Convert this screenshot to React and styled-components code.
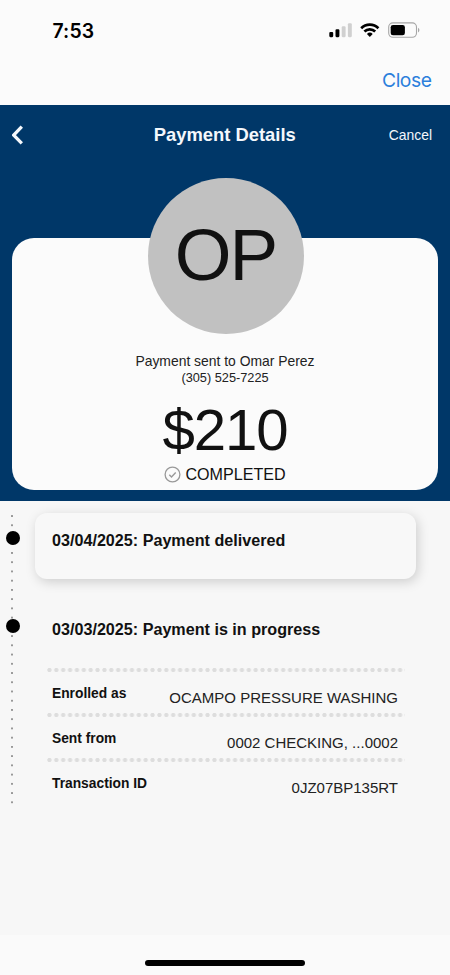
import React from "react"
import styled, { createGlobalStyle, css } from "styled-components"

const GlobalStyle = createGlobalStyle`
  * {
    box-sizing: border-box;
  }
  body {
    margin: 0;
    background-color: #f7f7f7;
    font-family: "Liberation Sans", Arial, sans-serif;
    color: #111;
  }
`

const Screen = styled.div`
  display: flex;
  flex-direction: column;
  width: 450px;
  height: 975px;
  overflow: hidden;
  background-color: #f7f7f7;
`

const StatusBar = styled.div`
  display: flex;
  align-items: center;
  justify-content: space-between;
  height: 60px;
  padding: 0 30px 0 52.5px;
  background-color: #fbfbfb;
`

const Time = styled.span`
  padding-top: 1px;
  font-family: Inter, sans-serif;
  font-size: 19.4px;
  font-weight: 600;
  letter-spacing: 0.1px;
  color: #000;
`

const StatusIcons = styled.svg`
  width: 91px;
  height: 18px;
`

const SheetBar = styled.div`
  display: flex;
  justify-content: flex-end;
  height: 45px;
  padding: 8px 18.5px 0 0;
  background-color: #fbfbfb;
`

const CloseLink = styled.span`
  font-family: Inter, sans-serif;
  font-size: 19.3px;
  line-height: 24px;
  letter-spacing: -0.45px;
  color: #2b7fdc;
`

const Hero = styled.div`
  height: 396px;
  padding: 0 12px;
  background-color: #003768;
`

const NavBar = styled.div`
  display: grid;
  grid-template-columns: 1fr auto 1fr;
  align-items: center;
  height: 59px;
  padding-right: 6px;
  color: #f4f8fc;
`

const BackIcon = styled.svg`
  width: 12px;
  height: 20px;
`

const Title = styled.h1`
  margin: 0;
  padding-left: 5.5px;
  font-size: 18.4px;
  font-weight: bold;
`

const CancelLink = styled.span`
  justify-self: end;
  font-size: 13.9px;
`

const PaymentCard = styled.div`
  display: flex;
  flex-direction: column;
  align-items: center;
  height: 252px;
  margin-top: 74px;
  border-radius: 22px;
  background-color: #fbfbfb;
`

const Avatar = styled.div`
  flex-shrink: 0;
  width: 156px;
  height: 156px;
  margin-top: -60px;
  margin-left: 1px;
  border-radius: 50%;
  background-color: #c1c1c1;
  font-size: 73px;
  line-height: 153px;
  letter-spacing: -2px;
  text-align: center;
`

const Recipient = styled.div`
  margin-top: 19px;
  font-size: 13.9px;
  line-height: 16px;
  color: #222;
`

const Phone = styled.div`
  font-size: 12.75px;
  line-height: 17px;
  color: #222;
`

const Amount = styled.div`
  margin-top: 10.5px;
  font-size: 58.2px;
  line-height: 66px;
  letter-spacing: -1.1px;
`

const Status = styled.div`
  display: flex;
  align-items: center;
  gap: 4px;
  margin-top: 1.5px;
  font-size: 16.1px;
  line-height: 20px;
`

const StatusIcon = styled.svg`
  width: 17px;
  height: 17px;
`

const Timeline = styled.div`
  display: flex;
  height: 434px;
`

const Rail = styled.div`
  display: flex;
  flex-direction: column;
  gap: 74.8px;
  width: 25px;
  height: 294px;
  margin-top: 11px;
  padding: 18.6px 0 0 5.7px;
  background: radial-gradient(circle, #777 0.5px, transparent 1.2px) 7.2px -0.6px / 10px 9.24px
    repeat-y;
`

const Marker = styled.span`
  width: 14px;
  height: 14px;
  border-radius: 50%;
  background-color: #000;
`

const Events = styled.div`
  width: 380.5px;
  margin: 12px 0 0 10px;
`

const eventStyles = css`
  padding-left: 17px;
  font-size: 16.15px;
  font-weight: bold;
  line-height: 20px;
`

const ActiveEvent = styled.div`
  ${eventStyles}
  height: 65.5px;
  padding-top: 17px;
  border-radius: 12px;
  background-color: #f8f8f8;
  box-shadow: 2px 3px 12px rgba(0, 0, 0, 0.17);
`

const Event = styled.div`
  ${eventStyles}
  padding-top: 40.5px;
`

const Details = styled.dl`
  width: 359px;
  margin: 29px 0 0 10.8px;
`

const DetailRow = styled.div`
  display: flex;
  justify-content: space-between;
  height: 45px;
  padding: 0 6.8px 0 6.2px;
  background: radial-gradient(circle, #dddddd 1.7px, transparent 2.6px) 0 0 / 6.885px 4px
    repeat-x;
`

const Label = styled.dt`
  padding-top: 17.5px;
  font-size: 13.8px;
  font-weight: bold;
  line-height: 16px;
`

const Value = styled.dd`
  margin: 0;
  padding-top: 21px;
  font-size: 15px;
  line-height: 18px;
  color: #222;
`

const HomeArea = styled.div`
  display: flex;
  justify-content: center;
  flex-grow: 1;
  padding-top: 25px;
  background-color: #fafafa;
`

const HomeIndicator = styled.div`
  width: 160.5px;
  height: 5.5px;
  border-radius: 3px;
  background-color: #000;
`

const details = [
  { label: "Enrolled as", value: "OCAMPO PRESSURE WASHING" },
  { label: "Sent from", value: "0002 CHECKING, ...0002" },
  { label: "Transaction ID", value: "0JZ07BP135RT" },
]

const App = () => (
  <>
    <GlobalStyle />
    <Screen>
      <StatusBar>
        <Time>7:53</Time>
        <StatusIcons viewBox="329 21 91 18">
          <rect x="329.3" y="32" width="3.9" height="5.2" rx="1.1" />
          <rect x="335.5" y="29.3" width="3.9" height="7.9" rx="1.1" />
          <rect x="341.7" y="26.3" width="3.9" height="10.9" rx="1.1" fill="#d0d0d0" />
          <rect x="347.9" y="23.2" width="3.9" height="14" rx="1.1" fill="#d0d0d0" />
          <g fill="none" stroke="#000" strokeWidth="2.7">
            <path d="M361.2 28.2a12.2 12.2 0 0 1 17.2 0" />
            <path d="M364.4 31.5a7.7 7.7 0 0 1 10.8 0" />
          </g>
          <path d="M369.8 36.9l-2.9-2.9a4.1 4.1 0 0 1 5.8 0z" />
          <rect
            x="388.7"
            y="22.9"
            width="27.8"
            height="14.4"
            rx="4.2"
            fill="none"
            stroke="#a6a6a6"
            strokeWidth="1.1"
          />
          <rect x="390.7" y="24.9" width="14.2" height="10.4" rx="2.3" />
          <path d="M418 27.8c1.9.8 1.9 3.8 0 4.6z" fill="#a6a6a6" />
        </StatusIcons>
      </StatusBar>
      <SheetBar>
        <CloseLink>Close</CloseLink>
      </SheetBar>
      <Hero>
        <NavBar>
          <BackIcon viewBox="0 0 12 20" fill="none" stroke="#f4f8fc" strokeWidth="3.3">
            <path d="M9.8 1.7L1.7 10.1l8.1 8.3" />
          </BackIcon>
          <Title>Payment Details</Title>
          <CancelLink>Cancel</CancelLink>
        </NavBar>
        <PaymentCard>
          <Avatar>OP</Avatar>
          <Recipient>Payment sent to Omar Perez</Recipient>
          <Phone>(305) 525-7225</Phone>
          <Amount>$210</Amount>
          <Status>
            <StatusIcon viewBox="0 0 17 17" fill="none" stroke="#999">
              <circle cx="8.5" cy="8.5" r="7.4" strokeWidth="1.3" />
              <path d="M5.3 8.7l2.2 2.2 4.2-4.4" strokeWidth="1.4" />
            </StatusIcon>
            COMPLETED
          </Status>
        </PaymentCard>
      </Hero>
      <Timeline>
        <Rail>
          <Marker />
          <Marker />
        </Rail>
        <Events>
          <ActiveEvent>03/04/2025: Payment delivered</ActiveEvent>
          <Event>03/03/2025: Payment is in progress</Event>
          <Details>
            {details.map(({ label, value }) => (
              <DetailRow key={label}>
                <Label>{label}</Label>
                <Value>{value}</Value>
              </DetailRow>
            ))}
          </Details>
        </Events>
      </Timeline>
      <HomeArea>
        <HomeIndicator />
      </HomeArea>
    </Screen>
  </>
)

export default App
